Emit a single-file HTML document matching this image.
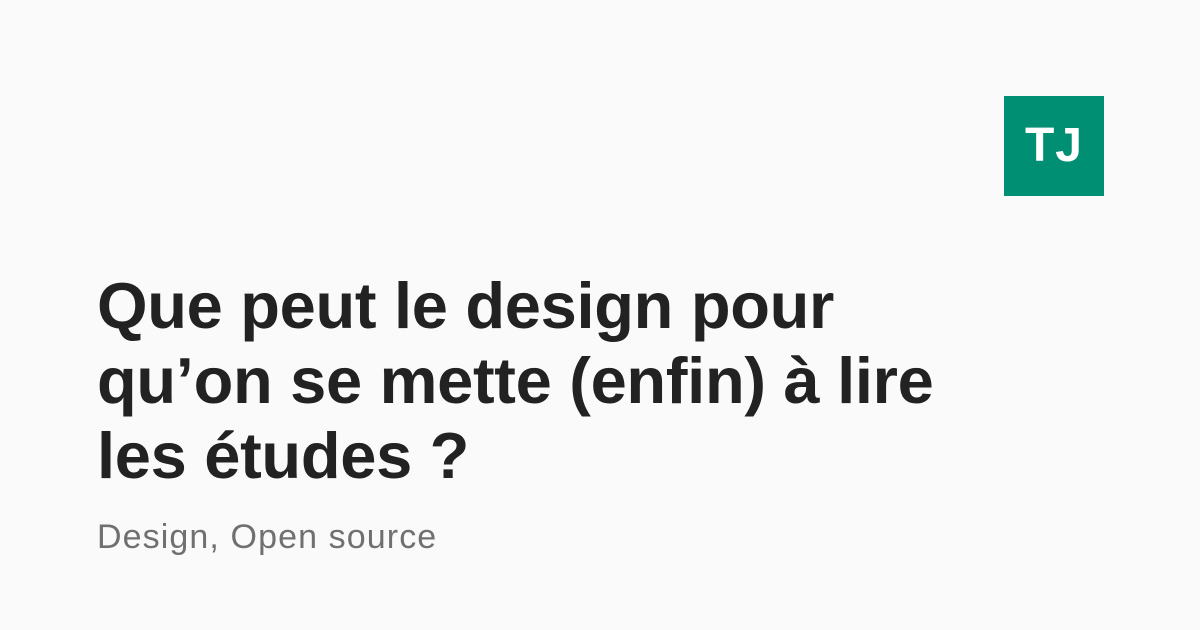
<!DOCTYPE html>
<html><head><meta charset="utf-8"><style>
html,body{margin:0;padding:0;}
body{width:1200px;height:630px;background:#fafafa;position:relative;overflow:hidden;font-family:"Liberation Sans",sans-serif;}
.logo{position:absolute;left:1004px;top:96px;width:100px;height:100px;background:#008f72;color:#fff;font-weight:bold;font-size:48px;line-height:100px;text-align:center;letter-spacing:1px;}
h1{position:absolute;left:97px;top:268px;margin:0;font-size:65px;line-height:75px;font-weight:bold;color:#222;letter-spacing:-0.3px;}
.sub{position:absolute;left:97px;top:518px;font-size:34px;color:#707070;letter-spacing:1.1px;}
</style></head><body>
<div class="logo">TJ</div>
<h1>Que peut le design pour<br>qu’on se mette (enfin) à lire<br>les études ?</h1>
<div class="sub">Design, Open source</div>
</body></html>
